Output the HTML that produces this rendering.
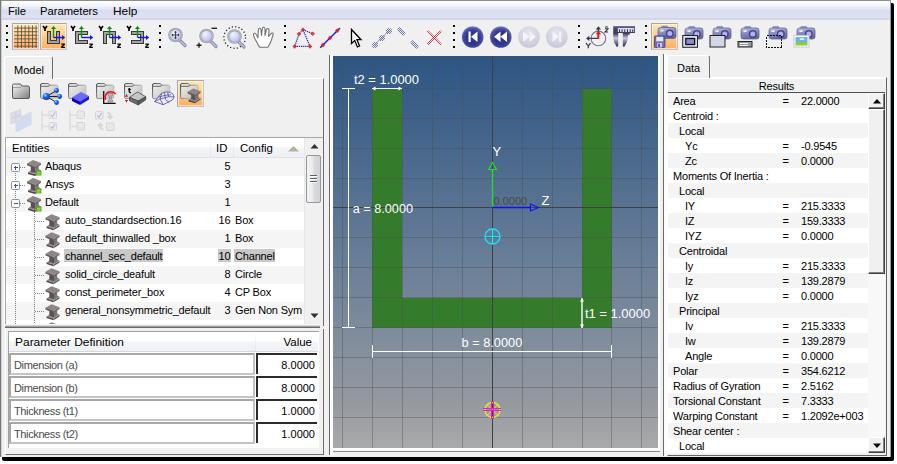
<!DOCTYPE html>
<html><head><meta charset="utf-8">
<style>
*{box-sizing:border-box;margin:0;padding:0}
html,body{width:897px;height:464px;overflow:hidden;background:#fff}
body{font-family:"Liberation Sans",sans-serif;font-size:11px;color:#000;position:relative}
.a{position:absolute}
#win{left:0;top:0;width:891px;height:457px;background:#f0f0f0;border-left:1px solid #787878;box-shadow:inset 1px 0 0 #cfcfcf;border-top:1px solid #8e8e8e;border-right:1px solid #9a9a9a}
#shr{left:891px;top:3px;width:3px;height:458px;background:#000;border-radius:0 2px 2px 0}
#shb{left:2px;top:457px;width:892px;height:4px;background:#000;border-radius:0 0 3px 2px}
#menu{left:2px;top:1px;width:888px;height:19px;background:linear-gradient(#fff 0,#f1f3fa 5px,#e3e7f5 8px,#d9ddf0 9px,#dde1f2 17px,#c3c7de 18px,#e8eaf4 19px)}
.mi{top:5px;font-size:11.500px;color:#000;transform:scaleX(0.975);transform-origin:0 0}
.grip{width:2px;height:23px;background:repeating-linear-gradient(#000 0,#000 2px,transparent 2px,transparent 7px)}
.tb{width:27px;height:27px;border:1px solid #a8a8a8;border-right-color:#c4c4c4;border-bottom-color:#c4c4c4;background:linear-gradient(#ffe7b0,#ffcf8a 45%,#fdad62);box-shadow:inset 0 0 0 1px rgba(255,255,255,.55)}
/* tabs */
.tab{height:22px;border:1px solid #fff;border-right:1px solid #6d6d6d;border-bottom:none;border-radius:3px 3px 0 0;background:#f0f0f0;font-size:11px;padding:7px 0 0 9px}
/* tree */
#tree{left:5px;top:137px;width:318px;height:187px;border-top:1px solid #a7a7a7;border-left:1px solid #a7a7a7;background:#fff;overflow:hidden}
.hd{background:linear-gradient(#fff,#fff 45%,#f3f4f6 55%,#eef0f3);font-size:11.500px;color:#000}.hd span{transform:scaleX(0.99);transform-origin:0 0}
.row{left:0;width:298px;height:18px}
.g{background:#f5f5f5}
.t{font-size:11px;white-space:nowrap;letter-spacing:-0.18px}
/* results */
.r{left:0;width:200px;height:15px;font-size:11px;white-space:nowrap;letter-spacing:-0.2px}
.r span{position:absolute;top:2px}.r span+span+span{letter-spacing:-0.2px}
.rg{background:#f4f4f4}
</style></head><body>
<div id="win" class="a"></div>
<div id="shr" class="a"></div><div id="shb" class="a"></div>
<div id="menu" class="a"></div>
<div class="a mi" style="left:8px">File</div>
<div class="a mi" style="left:40px">Parameters</div>
<div class="a mi" style="left:113px;transform:scaleX(1.03)">Help</div>
<!--TOOLBAR-->
<div class="a grip" style="left:6px;top:25px"></div>
<div class="a grip" style="left:159px;top:25px"></div>
<div class="a grip" style="left:284px;top:25px"></div>
<div class="a grip" style="left:453px;top:25px"></div>
<div class="a grip" style="left:578px;top:25px"></div>
<div class="a grip" style="left:645px;top:25px"></div>
<div class="a tb" style="left:12px;top:23px"></div>
<div class="a tb" style="left:40px;top:23px"></div>
<div class="a tb" style="left:651px;top:23px"></div>
<svg class="a" style="left:0;top:20px" width="891" height="35" viewBox="0 20 891 35" font-family="Liberation Sans, sans-serif">
<defs>
<radialGradient id="lens" cx="0.4" cy="0.35" r="0.7"><stop offset="0" stop-color="#f4f5ff"/><stop offset="0.5" stop-color="#d0d4f8"/><stop offset="1" stop-color="#b4b8ee"/></radialGradient>
<radialGradient id="ball" cx="0.5" cy="0.56" r="0.56"><stop offset="0" stop-color="#2e3288"/><stop offset="0.55" stop-color="#32368c"/><stop offset="0.78" stop-color="#474ca2"/><stop offset="0.92" stop-color="#666cb8"/><stop offset="1" stop-color="#9094cc"/></radialGradient>
<radialGradient id="balld" cx="0.5" cy="0.3" r="0.75"><stop offset="0" stop-color="#e4e4ee"/><stop offset="0.6" stop-color="#d3d3e1"/><stop offset="1" stop-color="#c4c4d6"/></radialGradient>
<linearGradient id="cam" x1="0" y1="0" x2="0.3" y2="1"><stop offset="0" stop-color="#c6c8e6"/><stop offset="0.45" stop-color="#8e90c8"/><stop offset="1" stop-color="#66689e"/></linearGradient>
<linearGradient id="calg" x1="0" y1="0" x2="1" y2="0"><stop offset="0" stop-color="#30304a"/><stop offset="0.5" stop-color="#c8c8d8"/><stop offset="1" stop-color="#34344e"/></linearGradient>
<pattern id="hb" width="2" height="2" patternUnits="userSpaceOnUse"><rect width="1" height="1" fill="#6e74a6"/><rect x="1" y="1" width="1" height="1" fill="#6e74a6"/></pattern><pattern id="hr" width="2" height="2" patternUnits="userSpaceOnUse"><rect width="1" height="1" fill="#d42a3c"/><rect x="1" y="1" width="1" height="1" fill="#d42a3c"/></pattern><g id="mag"><line x1="4" y1="5" x2="9.500" y2="10.500" stroke="#8a8ea0" stroke-width="3.200" stroke-linecap="round"/><line x1="5" y1="6" x2="9.500" y2="10.500" stroke="#b8bce8" stroke-width="1.600" stroke-linecap="round"/><circle cx="0" cy="0" r="6.300" fill="url(#lens)" stroke="#9a9aa4" stroke-width="2"/><circle cx="0" cy="0" r="6.300" fill="none" stroke="#c8c8d4" stroke-width="0.700"/></g>
<g id="camera"><rect x="3.500" y="0.500" width="6.500" height="3.500" rx="1.200" fill="#9698cc" stroke="#6a6ca8" stroke-width="0.500"/><rect x="0" y="2" width="18" height="11" rx="2.500" fill="url(#cam)" stroke="#56588e" stroke-width="0.700"/><circle cx="11.800" cy="8" r="4" fill="#46487e"/><circle cx="11.800" cy="8" r="2.500" fill="#b6aef8"/><rect x="2.500" y="4.300" width="3.200" height="1.600" rx="0.500" fill="#eeeefa"/></g>
<g id="axY" fill="none" stroke="#000" stroke-width="1.400"><path d="M0 2.100L2 4.700L4 2.100M2 4.500V6.900" stroke-width="1.700"/><path d="M18.300 20.100H21.700L18.400 23.300H21.900" stroke-width="1.300" stroke-linejoin="bevel"/></g><g id="axA"><path d="M10.500 13.500V4" stroke="#0a960a" stroke-width="1.400"/><path d="M10.500 2l-2.600 3h5.200z" fill="#0a960a"/><path d="M10.500 13.500h9" stroke="#1212ff" stroke-width="1.400"/><path d="M22.200 13.500l-3.200-2.600v5.200z" fill="#1212ff"/></g>
</defs>
<!-- grid icon -->
<g stroke="#5a4e44" stroke-width="0.850"><path d="M17.800 25.500V48M21.500 25.500V48M25.100 25.500V48M28.800 25.500V48M32.500 25.500V48M36.100 25.500V48M14 28.100H37.500M14 31.700H37.500M14 35.300H37.500M14 38.900H37.500M14 42.500H37.500M14 46.200H37.500"/></g>
<!-- section icons -->
<g transform="translate(43,24)"><use href="#axY"/><path d="M4.500 7.500H7.500V16.500H13.500V7.500H16.500V19.500H4.500Z" fill="#a2a2a2" stroke="#383838" stroke-width="1" stroke-linejoin="miter" shape-rendering="crispEdges"/><use href="#axA"/></g>
<g transform="translate(71,24)"><use href="#axY"/><path d="M4.500 7.500H16.500V10.500H7.500V16.500H16.500V19.500H4.500Z" fill="#a2a2a2" stroke="#383838" stroke-width="1" stroke-linejoin="miter" shape-rendering="crispEdges"/><use href="#axA"/></g>
<g transform="translate(99,24)"><use href="#axY"/><path d="M4.500 19.500V7.500H16.500V19.500H13.500V10.500H7.500V19.500Z" fill="#a2a2a2" stroke="#383838" stroke-width="1" stroke-linejoin="miter" shape-rendering="crispEdges"/><use href="#axA"/></g>
<g transform="translate(127,24)"><use href="#axY"/><path d="M4.500 7.500H16.500V19.500H4.500V16.500H13.500V10.500H4.500Z" fill="#a2a2a2" stroke="#383838" stroke-width="1" stroke-linejoin="miter" shape-rendering="crispEdges"/><use href="#axA"/></g>
<!-- magnifiers -->
<g transform="translate(175.500,35)"><use href="#mag"/><path d="M-3.500 0h7M0 -3.500v7" stroke="#444" stroke-width="1"/><path d="M-4 0l1.500-1.500v3zM4 0l-1.500-1.500v3zM0 -4l-1.500 1.500h3zM0 4l-1.500-1.500h3z" fill="#333"/></g>
<g transform="translate(206.500,36)"><use href="#mag"/><path d="M-10 9.300h5M-7.500 6.800v5" stroke="#222" stroke-width="1.400"/><path d="M5 -7.700h5.500" stroke="#222" stroke-width="1.400"/></g>
<g transform="translate(234.500,36.500)"><circle cx="0.200" cy="1" r="10.800" fill="none" stroke="#222" stroke-width="1.300" stroke-dasharray="1.200 2.200"/><use href="#mag"/></g>
<!-- hand -->
<path d="M259.500 47.300C258 44.500 256.500 41.500 255 39C253.300 36 253 33.800 254.300 33.300C255.600 32.800 256.800 35 258 37.800L258.300 30C258.400 27.800 260.800 27.600 261 30L261.500 35.500L262.300 29C262.600 26.600 265 26.800 265 29.200V35.500L266.300 30C266.900 27.800 269.200 28.300 269 30.500L268.600 36.500L270.800 33.800C272 32.300 273.500 33 273 34.800C272.300 37.500 271.300 41 270 43.500C269.300 45 268.500 46.200 267.800 47.300Z" fill="#fff" stroke="#727272" stroke-width="1.100" stroke-linejoin="round"/>
<!-- triangle polyline -->
<g><path d="M294.700 46.400H310L303 29.700L299 34L294.700 46.400M303 29.700L312.700 33.700" fill="none" stroke="#2a2ab4" stroke-width="1.200" stroke-dasharray="1.300 0.800"/>
<g fill="#dc2222" fill-opacity="0.85"><path d="M294.700 44.100l2.300 2.300-2.300 2.300-2.300-2.300zM310 44.100l2.300 2.300-2.300 2.300-2.300-2.300zM303 27.400l2.300 2.300-2.300 2.300-2.300-2.300zM299 31.700l2.300 2.300-2.300 2.300-2.300-2.300zM312.700 31.400l2.300 2.300-2.300 2.300-2.300-2.300z"/></g></g>
<!-- line with points -->
<path d="M320.200 47.700L340 28" stroke="#1c1cc8" stroke-width="1.400"/><g fill="#dc2222" fill-opacity="0.85"><path d="M323 42.600l2.400 2.400-2.400 2.400-2.400-2.400zM330 35.500l2.400 2.400-2.400 2.400-2.400-2.400zM337.200 28.300l2.400 2.400-2.400 2.400-2.400-2.400z"/></g>
<!-- cursor -->
<path d="M351.500 29.500v14l3.200-3 2.700 6.500 2.200-1-2.700-6.300h4.100z" fill="#fff" stroke="#000" stroke-width="1.300" stroke-linejoin="miter"/>
<!-- dotted line icon -->
<g fill="url(#hb)"><path d="M374.500 45L389 30.500" stroke="#8a90b6" stroke-width="1"/><circle cx="375" cy="45" r="3.100"/><circle cx="382" cy="38" r="3.100"/><circle cx="389" cy="31" r="3.100"/>
</g><g stroke="url(#hb)" stroke-width="4.600" stroke-linecap="round" fill="none"><path d="M399.600 29.800L403 33.200"/><path d="M412.800 42.800L416.200 46.200"/></g>
<!-- red X -->
<g stroke="url(#hr)" stroke-width="2.200" stroke-linecap="butt" fill="none"><path d="M427.500 31L441 44.500"/><path d="M441 31L427.500 44.500"/></g>
<!-- round buttons -->
<circle cx="472.700" cy="37" r="10.800" fill="url(#ball)"/><path d="M468.500 31.500h2.200v10.500h-2.200zM477.500 31.500v10.500l-6.500-5.250z" fill="#fff"/>
<circle cx="500.800" cy="37" r="10.800" fill="url(#ball)"/><path d="M500.500 31.500v10.500l-6.500-5.250zM507 31.500v10.500l-6.500-5.250z" fill="#fff"/>
<circle cx="529" cy="37" r="10.800" fill="url(#balld)"/><path d="M523 31.500v10.500l6.500-5.250zM529.500 31.500v10.500l6.500-5.250z" fill="#f4f4f8"/>
<circle cx="556.800" cy="37" r="10.800" fill="url(#balld)"/><path d="M552.500 31.500v10.500l6.500-5.250zM559 31.500h2.200v10.500h-2.200z" fill="#f4f4f8"/>
<!-- axis/circle icon -->
<g><circle cx="598.400" cy="38.400" r="7.300" fill="none" stroke="#78789a" stroke-width="1.100"/><path d="M598.400 38.400H588M598.400 38.400V28" stroke="#3a3a4a" stroke-width="1.400" fill="none"/><path d="M586 38.400l3.300-2.700v5.400zM598.400 26.200l-2.700 3.300h5.400z" fill="#3a3a4a"/><path d="M598.400 38.800V33" stroke="#f01010" stroke-width="1.700"/><path d="M598.400 31l-2.700 3.300h5.400z" fill="#f01010"/><path d="M605 27h3M605 28.800h3l-3 3.200h3" stroke="#333" stroke-width="1.100" fill="none"/><path d="M586 43.200l2.300 2.600 2.300-2.600M588.300 45.800v2.400" stroke="#333" stroke-width="1.200" fill="none"/></g>
<!-- caliper -->
<g><defs><linearGradient id="calv" x1="0" y1="0" x2="0" y2="1"><stop offset="0" stop-color="#34344e"/><stop offset="0.38" stop-color="#c6c6e2"/><stop offset="0.6" stop-color="#8a8aa8"/><stop offset="1" stop-color="#26263e"/></linearGradient><linearGradient id="calt" x1="0" y1="0" x2="0" y2="1"><stop offset="0" stop-color="#7c7c9c"/><stop offset="0.3" stop-color="#46466a"/><stop offset="1" stop-color="#3c3c5c"/></linearGradient></defs>
<path d="M613.200 26h21.800v7h-21.800z" fill="url(#calt)"/><path d="M617.800 28h16.400v4h-16.400z" fill="#dcdcf2"/><path d="M619.500 29.300v2.700M622.100 29.300v2.700M624.800 29.300v2.700M627.500 29.300v2.700M630.200 29.300v2.700M632.800 29.300v2.700" stroke="#2e2e48" stroke-width="1"/>
<path d="M613.200 33H618.200V46Q617.600 47.300 616.500 46.500Q613.200 42 613.200 37Z" fill="url(#calv)"/><path d="M622.800 33H629.800V34.700H628.200Q628 41.500 624.500 46.500Q623.400 47.300 622.800 46Z" fill="url(#calv)"/></g>
<!-- cameras -->
<g transform="translate(658,25.500)"><use href="#camera"/><rect x="-3.500" y="10.500" width="10.500" height="11.500" rx="0.800" fill="#6e70b2" stroke="#3c3e80" stroke-width="0.800"/><rect x="-1.800" y="11.300" width="7" height="4.500" fill="#e6e6f6"/><rect x="-0.800" y="17.500" width="5" height="4.500" fill="#c8c8e6"/><rect x="0.300" y="18.300" width="1.600" height="3.200" fill="#44468a"/></g>
<g transform="translate(685,26)"><use href="#camera"/><rect x="-2.300" y="9.500" width="14.800" height="11.800" fill="#dcdcec" stroke="#222" stroke-width="1"/><rect x="0.800" y="12.500" width="8.800" height="6" fill="#8890d0" stroke="#111" stroke-width="1.300"/></g>
<g transform="translate(713,26)"><use href="#camera"/><rect x="-3" y="9.500" width="15" height="11.500" fill="#d4d6e8" stroke="#222" stroke-width="1"/></g>
<g transform="translate(741,26)"><use href="#camera"/><rect x="-3" y="15.500" width="14" height="5.500" fill="#9a9aa8" stroke="#222" stroke-width="1"/><path d="M-1 17.500h8M-1 19.500h8" stroke="#fff" stroke-width="0.900"/></g>
<g transform="translate(769,26)"><use href="#camera"/><rect x="-2.500" y="9.500" width="15" height="12" fill="none" stroke="#111" stroke-width="1" stroke-dasharray="2 1" shape-rendering="crispEdges"/></g>
<g transform="translate(797,26)"><use href="#camera"/><rect x="-3" y="9.500" width="15" height="11.500" fill="#fff" stroke="#c8c8c8" stroke-width="1"/><rect x="-1.500" y="11" width="12" height="5" fill="#6ab4ee"/><rect x="-1.500" y="16" width="12" height="3.500" fill="#8ccc3c"/><ellipse cx="5" cy="13" rx="2.500" ry="1" fill="#e8f4ff"/></g>
</svg>
<!--/TOOLBAR-->
<!--LEFT-->
<div class="a" style="left:4px;top:78px;width:320px;height:248px;border-top:1px solid #fff;border-left:1px solid #fff;border-right:1px solid #6d6d6d"></div>
<div class="a tab" style="left:4px;top:56px;width:49px;height:23px;">Model</div>
<div class="a tb" style="left:177px;top:80px"></div>
<svg class="a" style="left:0;top:78px" width="326" height="59" viewBox="0 78 326 59" font-family="Liberation Sans, sans-serif">
<defs>
<linearGradient id="fg" x1="0" y1="0" x2="1" y2="1"><stop offset="0" stop-color="#f4f4f4"/><stop offset="0.45" stop-color="#c4c4c4"/><stop offset="1" stop-color="#7c7c7c"/></linearGradient>
<linearGradient id="fgl" x1="0" y1="0" x2="1" y2="1"><stop offset="0" stop-color="#f4f4f4"/><stop offset="0.5" stop-color="#d6d6d6"/><stop offset="1" stop-color="#b0b0b0"/></linearGradient>
<radialGradient id="bb" cx="0.35" cy="0.3" r="0.8"><stop offset="0" stop-color="#9cd0ff"/><stop offset="0.4" stop-color="#1c6cf0"/><stop offset="1" stop-color="#0030a0"/></radialGradient>
<g id="fold"><path d="M0.500 2.500q0-1.500 1.500-1.500h6q1 0 1.300 1l.3 1H16q1.500 0 1.500 1.500v9.500q0 1.500-1.500 1.500H2q-1.500 0-1.500-1.500z" fill="url(#fg)" stroke="#5a5a5a" stroke-width="1"/><path d="M1 4.500h8" stroke="#888" stroke-width="0.700"/></g>
<linearGradient id="fst" x1="0" y1="0" x2="1" y2="0.6"><stop offset="0" stop-color="#3e3e3e"/><stop offset="0.45" stop-color="#8a8a8a"/><stop offset="1" stop-color="#c6c6c6"/></linearGradient><g id="foldl"><path d="M0.600 2q0-1.400 1.400-1.400h6.300q1 0 1 1v0.600h7.200q1.400 0 1.400 1.400v10.600q0 1.400-1.400 1.400H2q-1.400 0-1.400-1.400z" fill="url(#fgl)" fill-opacity="0.92" stroke="url(#fst)" stroke-width="1"/><path d="M1 3.300h7.600q.8 0 .8-.9" fill="none" stroke="#555" stroke-width="0.900"/></g>
<g id="ibeam"><path d="M1 12.200l4.500-2.700 3.500 1.300 2.500-1.500 2.500 1-6 3.800z" fill="#8c8484"/><path d="M1 12.200l7 2.100v1.700l-7-2.100z" fill="#4e4646"/><path d="M8 14.300l6-3.800v1.700l-6 3.800z" fill="#625a5a"/><path d="M3.800 5.500l4.700 1.800v5.700l-4.700-1.700z" fill="#5a5252"/><path d="M8.500 7.300l3.200-2v5.700l-3.200 2z" fill="#7c7474"/><path d="M0 3.500l6-3.500 8 3-6 3.800z" fill="#8e8686"/><path d="M0 3.500l8 3.300v1.800l-8-3.300z" fill="#5e5656"/><path d="M8 6.800l6-3.800v1.800l-6 3.800z" fill="#6e6666"/></g>
<g id="chk"><rect x="0.500" y="0.500" width="7.500" height="7.500" rx="1" fill="#ececf0" stroke="#d6d6da" stroke-width="1"/><path d="M2.200 4.300l1.700 2 2.800-4.600" fill="none" stroke="#b4bce0" stroke-width="1.200"/></g>
<g id="unchk"><rect x="0.500" y="0.500" width="7.500" height="7.500" rx="1" fill="#e8e8ea" stroke="#d6d6da" stroke-width="1"/></g>
</defs>
<use href="#fold" x="12" y="83"/>
<use href="#foldl" x="40" y="83"/><g stroke="#222" stroke-width="1"><path d="M46.500 96.500l10-6M46.500 96.500h13M46.500 96.500l10 6"/></g><circle cx="46.300" cy="96.500" r="3.600" fill="url(#bb)"/><circle cx="56.500" cy="90.500" r="2.400" fill="url(#bb)"/><circle cx="59.700" cy="96.500" r="2.400" fill="url(#bb)"/><circle cx="56.500" cy="102.500" r="2.400" fill="url(#bb)"/>
<use href="#foldl" x="68" y="83"/><path d="M72 97.500l9-5.500 8 4-9 5.500z" fill="#6a6af8"/><path d="M72 97.500l8 4v3.500l-8-4z" fill="#0808c0"/><path d="M80 101.500l9-5.500v3.500l-9 5.500z" fill="#1a1ae0"/>
<use href="#foldl" x="96" y="83"/><path d="M103.700 91v12.400h12" fill="none" stroke="#111" stroke-width="1.300"/><path d="M105.200 100q-.6-8.300 5.500-8.300q3.500 0 5 2.300" fill="none" stroke="#ff1010" stroke-width="1.500"/><path d="M108 93.300h4.700v1.400l-1.500 1.700v2.400l1.500 1.700v1.500h-4.700v-1.500l1.500-1.700v-2.400l-1.500-1.700z" fill="#b8b8b8" stroke="#6a6a6a" stroke-width="0.600"/>
<use href="#foldl" x="124" y="83"/><path d="M129.300 88v3.600q0 1 1 1h.6M128.200 89.500h2.600" fill="none" stroke="#000" stroke-width="1.300"/><path d="M125.100 96.200h2.800M126.500 96.200v-1.800M125.100 100.600h2.800M126.500 100.600v1.800" stroke="#c81414" stroke-width="1"/><path d="M129.500 97.400l8-5.400 8.300 4.700-7.600 4.400z" fill="#c6c6c6" stroke="#3c3c3c" stroke-width="0.700"/><path d="M129.500 97.400l8.700 3.700v3.900l-8.700-4.200z" fill="#6c6c6c" stroke="#3c3c3c" stroke-width="0.700"/><path d="M138.200 101.100l7.600-4.400v3l-7.600 5.300z" fill="#5c5c5c" stroke="#3c3c3c" stroke-width="0.700"/>
<use href="#foldl" x="152" y="83"/><g fill="#ececfa" stroke="#4a4aa8" stroke-width="0.800"><path d="M154.600 101.500l7-8.300q5-2 9-.8 3 1.500 3.500 4.500l-1.500 3-9.500 4.800z"/><path d="M161.600 93.200l-1.500 5.800-5.500 2.500M160.100 99l8.500-2.300 5.500.2M168.600 96.700l-1-4.500M160.100 99l3 5.700M158 97.300l7-2 6-.5M164.500 93l1 6.500 3.800 3" fill="none"/></g>
<use href="#foldl" x="180" y="83"/><g transform="translate(187.700,88.600) scale(0.92)"><use href="#ibeam"/></g>
<!-- disabled row -->
<g opacity="0.95"><path d="M15.500 118.500q5-1 8.500-3.500 3.500-2.500 7.500-3.500v13.500q-4 1-7.500 3.500-3.500 2.500-8.500 3.500z" fill="#d0dcec"/><path d="M10.800 113l10-3.500v11l-10 3.500z" fill="#dcdce8" stroke="#d2d2de" stroke-width="0.600"/><path d="M15.800 111.200v11M10.800 118.500l10-3.500" stroke="#cacada" stroke-width="0.800"/></g>
<g stroke="#dcdcdc" stroke-width="1.600" fill="none"><path d="M42 110.500v20.500M42 115h6.500M42 126.500h6.500"/><path d="M70 110.500v20.500M70 115h6.500M70 126.500h6.500"/></g>
<use href="#chk" x="48.500" y="110.500"/><use href="#chk" x="48.500" y="122"/>
<use href="#unchk" x="76.500" y="110.500"/><use href="#unchk" x="76.500" y="122"/>
<use href="#chk" x="95" y="111"/><use href="#unchk" x="106" y="122.500"/>
<path d="M107 111.500q4.500 .5 4.500 4.500h2.300l-3.600 3.800-3.600-3.800h2.300q0-2.200-1.900-3z" fill="#d8d8d8"/><path d="M103.500 130.500q-4.500-.5-4.500-4.500h-2.300l3.600-3.800 3.600 3.800h-2.300q0 2.200 1.900 3z" fill="#d8d8d8"/>
</svg>
<div id="tree" class="a">
<div class="a hd" style="left:0;top:0;width:298px;height:20px;border-bottom:1px solid #e0e3e8"><span class="a" style="left:6px;top:4px">Entities</span><span class="a" style="left:210px;top:4px">ID</span><span class="a" style="left:234px;top:4px">Config</span><div class="a" style="left:204px;top:0;width:1px;height:19px;background:linear-gradient(#fff,#dfe2e8)"></div><div class="a" style="left:227px;top:0;width:1px;height:19px;background:linear-gradient(#fff,#dfe2e8)"></div><svg class="a" style="left:282px;top:8px" width="11" height="6"><path d="M0 5.500L5.500 0 11 5.500z" fill="#b4b09c"/></svg></div>
<div class="a row g" style="top:20px">
<span class="a t" style="left:39px;top:2px">Abaqus</span>
<span class="a t" style="left:194.500px;width:30px;text-align:right;top:2px">5</span>
</div>
<div class="a row" style="top:38px">
<span class="a t" style="left:39px;top:2px">Ansys</span>
<span class="a t" style="left:194.500px;width:30px;text-align:right;top:2px">3</span>
</div>
<div class="a row g" style="top:56px">
<span class="a t" style="left:39px;top:2px">Default</span>
<span class="a t" style="left:194.500px;width:30px;text-align:right;top:2px">1</span>
</div>
<div class="a row" style="top:74px">
<span class="a t" style="left:59px;top:2px">auto_standardsection.16</span>
<span class="a t" style="left:194.500px;width:30px;text-align:right;top:2px">16</span>
<span class="a t" style="left:229px;top:2px">Box</span>
</div>
<div class="a row g" style="top:92px">
<span class="a t" style="left:59px;top:2px">default_thinwalled _box</span>
<span class="a t" style="left:194.500px;width:30px;text-align:right;top:2px">1</span>
<span class="a t" style="left:229px;top:2px">Box</span>
</div>
<div class="a row" style="top:110px">
<span class="a" style="left:58px;top:1px;width:99px;height:13px;background:#c9c9c9"></span><span class="a" style="left:212px;top:1px;width:13px;height:13px;background:#c9c9c9"></span><span class="a" style="left:228px;top:1px;width:41px;height:13px;background:#c9c9c9"></span>
<span class="a t" style="left:59px;top:2px">channel_sec_default</span>
<span class="a t" style="left:194.500px;width:30px;text-align:right;top:2px">10</span>
<span class="a t" style="left:229px;top:2px">Channel</span>
</div>
<div class="a row g" style="top:128px">
<span class="a t" style="left:59px;top:2px">solid_circle_deafult</span>
<span class="a t" style="left:194.500px;width:30px;text-align:right;top:2px">8</span>
<span class="a t" style="left:229px;top:2px">Circle</span>
</div>
<div class="a row" style="top:146px">
<span class="a t" style="left:59px;top:2px">const_perimeter_box</span>
<span class="a t" style="left:194.500px;width:30px;text-align:right;top:2px">4</span>
<span class="a t" style="left:229px;top:2px">CP Box</span>
</div>
<div class="a row g" style="top:164px">
<span class="a t" style="left:59px;top:2px">general_nonsymmetric_default</span>
<span class="a t" style="left:194.500px;width:30px;text-align:right;top:2px">3</span>
<span class="a t" style="left:229px;top:2px">Gen Non Sym</span>
</div>
<svg class="a" style="left:0;top:20px" width="70" height="172" viewBox="0 0 70 172"><g stroke="#808080" stroke-width="1" stroke-dasharray="1 1" shape-rendering="crispEdges"><path d="M9.500 9V172M28.500 48V172"/><path d="M14 9.500H20"/><path d="M14 27.500H20"/><path d="M14 45.500H20"/><path d="M29 63.500H38"/><path d="M29 81.500H38"/><path d="M29 99.500H38"/><path d="M29 117.500H38"/><path d="M29 135.500H38"/><path d="M29 153.500H38"/></g><rect x="5.500" y="5.5" width="8" height="8" rx="1" fill="#fcfcfc" stroke="#919191"/><path d="M7.500 9.5h4" stroke="#3c50b4" stroke-width="1" shape-rendering="crispEdges"/><path d="M9.500 7.5v4" stroke="#3c50b4" stroke-width="1" shape-rendering="crispEdges"/><g transform="translate(21,2)"><use href="#ibeam"/><rect x="9" y="10.500" width="5.500" height="5" fill="#58b010"/><path d="M10 12.300h3.500M10 14h3.500" stroke="#c8f080" stroke-width="0.700"/></g><rect x="5.500" y="23.5" width="8" height="8" rx="1" fill="#fcfcfc" stroke="#919191"/><path d="M7.500 27.5h4" stroke="#3c50b4" stroke-width="1" shape-rendering="crispEdges"/><path d="M9.500 25.5v4" stroke="#3c50b4" stroke-width="1" shape-rendering="crispEdges"/><g transform="translate(21,20)"><use href="#ibeam"/><rect x="9" y="10.500" width="5.500" height="5" fill="#58b010"/><path d="M10 12.300h3.500M10 14h3.500" stroke="#c8f080" stroke-width="0.700"/></g><rect x="5.500" y="41.5" width="8" height="8" rx="1" fill="#fcfcfc" stroke="#919191"/><path d="M7.500 45.5h4" stroke="#3c50b4" stroke-width="1" shape-rendering="crispEdges"/><g transform="translate(21,38)"><use href="#ibeam"/><rect x="9" y="10.500" width="5.500" height="5" fill="#58b010"/><path d="M10 12.300h3.500M10 14h3.500" stroke="#c8f080" stroke-width="0.700"/></g><g transform="translate(39.500,56.2)"><use href="#ibeam"/></g><g transform="translate(39.500,74.2)"><use href="#ibeam"/></g><g transform="translate(39.500,92.2)"><use href="#ibeam"/></g><g transform="translate(39.500,110.2)"><use href="#ibeam"/></g><g transform="translate(39.500,128.2)"><use href="#ibeam"/></g><g transform="translate(39.500,146.2)"><use href="#ibeam"/></g><g transform="translate(39.500,164.2)"><use href="#ibeam"/></g></svg>
<div class="a" style="left:298px;top:0;width:19px;height:186px;background:#f0f0f0;border-left:1px solid #e6e6e6"></div>
<svg class="a" style="left:304px;top:5px" width="9" height="6"><path d="M0.500 5.500L4.500 1 8.500 5.500z" fill="#303030"/></svg>
<svg class="a" style="left:304px;top:175px" width="9" height="6"><path d="M0.500 0.500L4.500 5 8.500 0.500z" fill="#303030"/></svg>
<div class="a" style="left:300px;top:17px;width:15px;height:48px;border:1px solid #979797;border-radius:2px;background:linear-gradient(90deg,#f4f4f4,#e9e9eb 45%,#d8d9dc 55%,#d2d3d6)"></div>
<div class="a" style="left:304px;top:37px;width:7px;height:9px;background:repeating-linear-gradient(#5a6270 0,#5a6270 1px,#fff 1px,#fff 2px,transparent 2px,transparent 3px)"></div>
</div>

<div class="a" style="left:5px;top:324px;width:315px;height:4px;background:linear-gradient(#fafafa 1px,#d4d4d4 1px,#d4d4d4 2px,#a0a0a0 2px,#a0a0a0 3px,#686868 3px)"></div>
<div class="a" style="left:5px;top:329px;width:319px;height:126px;border-left:1px solid #fff;border-right:1px solid #6d6d6d;border-bottom:1px solid #6d6d6d"></div>
<div class="a" style="left:8px;top:331px;width:311px;height:117px;border-top:1px solid #a0a0a0;border-left:1px solid #a0a0a0;background:#fff"></div>
<div class="a hd" style="left:9px;top:332px;width:309px;height:20px;border-bottom:1px solid #d5d8de"><span class="a" style="left:6px;top:4px;transform:scaleX(1.04)">Parameter Definition</span><span class="a" style="right:6px;top:4px;transform:none">Value</span><div class="a" style="left:246px;top:0;width:1px;height:19px;background:linear-gradient(#fff,#dfe2e8)"></div></div>
<div class="a" style="left:9px;top:353px;width:246px;height:22px;border:2px solid #a6a6a6;border-right-color:#c4c4c4;border-bottom-color:#c4c4c4;background:#fff;color:#4a4a4a;font-size:11px;letter-spacing:-0.38px;padding:4px 0 0 3px">Dimension (a)</div>
<div class="a" style="left:256px;top:353px;width:61px;height:21px;border-top:2px solid #2c2c2c;border-left:2px solid #2c2c2c;background:#fff;color:#000;font-size:11px;padding:4px 2px 0 0;text-align:right">8.0000</div>
<div class="a" style="left:9px;top:376px;width:246px;height:22px;border:2px solid #a6a6a6;border-right-color:#c4c4c4;border-bottom-color:#c4c4c4;background:#fff;color:#4a4a4a;font-size:11px;letter-spacing:-0.38px;padding:4px 0 0 3px">Dimension (b)</div>
<div class="a" style="left:256px;top:376px;width:61px;height:21px;border-top:2px solid #2c2c2c;border-left:2px solid #2c2c2c;background:#fff;color:#000;font-size:11px;padding:4px 2px 0 0;text-align:right">8.0000</div>
<div class="a" style="left:9px;top:399px;width:246px;height:22px;border:2px solid #a6a6a6;border-right-color:#c4c4c4;border-bottom-color:#c4c4c4;background:#fff;color:#4a4a4a;font-size:11px;letter-spacing:-0.38px;padding:4px 0 0 3px">Thickness (t1)</div>
<div class="a" style="left:256px;top:399px;width:61px;height:21px;border-top:2px solid #2c2c2c;border-left:2px solid #2c2c2c;background:#fff;color:#000;font-size:11px;padding:4px 2px 0 0;text-align:right">1.0000</div>
<div class="a" style="left:9px;top:422px;width:246px;height:22px;border:2px solid #a6a6a6;border-right-color:#c4c4c4;border-bottom-color:#c4c4c4;background:#fff;color:#4a4a4a;font-size:11px;letter-spacing:-0.38px;padding:4px 0 0 3px">Thickness (t2)</div>
<div class="a" style="left:256px;top:422px;width:61px;height:21px;border-top:2px solid #2c2c2c;border-left:2px solid #2c2c2c;background:#fff;color:#000;font-size:11px;padding:4px 2px 0 0;text-align:right">1.0000</div>
<!--/LEFT-->
<!--GFX-->
<div class="a" style="left:329px;top:55px;width:4px;height:400px;background:linear-gradient(90deg,#6a6a6a 1px,#fcfcfc 1px)"></div>
<div class="a" style="left:333px;top:448px;width:327px;height:4px;background:linear-gradient(#fff 2px,#f0f0f0 2px,#f0f0f0 3px,#8a8a8a 3px)"></div><div class="a" style="left:658px;top:56px;width:2px;height:394px;background:#fcfcfc"></div>
<svg class="a" style="left:333px;top:56px" width="325" height="392" viewBox="333 56 325 392" shape-rendering="crispEdges" font-family="Liberation Sans, sans-serif">
<defs><linearGradient id="bg" x1="0" y1="0" x2="0" y2="1"><stop offset="0" stop-color="#2d5582"/><stop offset="0.5" stop-color="#667c97"/><stop offset="0.88" stop-color="#9499a0"/><stop offset="1" stop-color="#aaaaaa"/></linearGradient></defs>
<rect x="333" y="56" width="325" height="392" fill="url(#bg)"/>
<path d="M372 89H402V298H582V89H612V328H372Z" fill="#347c2c"/>
<g stroke="#4b4b4b" stroke-opacity="0.38" stroke-width="1">
<path d="M342.500 56V448M372.500 56V448M402.500 56V448M432.500 56V448M462.500 56V448M522.500 56V448M552.500 56V448M582.500 56V448M611.500 56V448M641.500 56V448"/>
<path d="M333 58.500H658M333 88.500H658M333 118.500H658M333 148.500H658M333 178.500H658M333 237.500H658M333 267.500H658M333 297.500H658M333 327.500H658M333 357.500H658M333 387.500H658M333 417.500H658"/>
</g>
<path d="M492.500 56V448M333 207.500H658" stroke="#404042" stroke-width="1"/>
<!-- dims -->
<g stroke="#fff" stroke-width="1" fill="none">
<path d="M348.500 89V327M342 88.500H355M342 327.500H355"/>
<path d="M372 88.500H402"/>
<path d="M372 351.500H612M372.500 345V358M611.500 345V358"/>
<path d="M582 298V328" shape-rendering="auto" stroke-width="1.400"/>
</g>
<g fill="#fff" shape-rendering="auto"><path d="M372 88.500l3.500-2v4zM402 88.500l-3.500-2v4zM582 298l-2 3.500h4zM582 328l-2-3.500h4z"/></g>
<g fill="#fff" font-size="13.600" shape-rendering="auto">
<text x="354" y="84" textLength="65" lengthAdjust="spacingAndGlyphs">t2 = 1.0000</text>
<text x="352.800" y="213" textLength="60.200" lengthAdjust="spacingAndGlyphs">a = 8.0000</text>
<text x="461.500" y="347" textLength="60.800" lengthAdjust="spacingAndGlyphs">b = 8.0000</text>
<text x="585" y="318" textLength="65.200" lengthAdjust="spacingAndGlyphs">t1 = 1.0000</text>
<text x="492.500" y="156" font-size="13">Y</text>
<text x="541.500" y="205" font-size="13">Z</text>
</g>
<text x="493.500" y="205" font-size="11" fill="#484848" shape-rendering="auto">0.0000</text>
<g shape-rendering="auto" fill="none">
<path d="M492.500 208V170" stroke="#22e022" stroke-width="1.300"/>
<path d="M492.500 162.500l-4 7h8z" stroke="#22e022" stroke-width="1.100"/>
<path d="M492 207.500H531" stroke="#1010f0" stroke-width="1.500"/>
<path d="M538.500 207.500l-8-3.500v7z" stroke="#1010f0" stroke-width="1.100"/>
<circle cx="492.500" cy="236.500" r="7.500" stroke="#19e6f0" stroke-width="1.300"/>
<path d="M492.500 229v15M485 236.500h15" stroke="#19e6f0" stroke-width="1.200"/>
<circle cx="492.500" cy="410" r="7.500" stroke="#e8e81c" stroke-width="1.500"/>
<path d="M487 404.500l11 11M498 404.500l-11 11" stroke="#e8e81c" stroke-width="1"/>
<path d="M491.500 401v18M493.500 401v18M483 408.500h18M483 410.500h18" stroke="#f018d8" stroke-width="1"/>
</g>
</svg>
<!--/GFX-->
<!--RIGHT-->
<div class="a" style="left:663px;top:54px;width:4px;height:402px;background:linear-gradient(90deg,#6a6a6a 1px,#fcfcfc 1px)"></div>
<div class="a" style="left:667px;top:77px;width:220px;height:379px;border-top:1px solid #fff;border-left:1px solid #fff;border-right:1px solid #646464;border-bottom:1px solid #646464"></div>
<div class="a tab" style="left:667px;top:55px;width:43px;height:23px;padding:6px 0 0 9px">Data</div>
<div class="a" style="left:668px;top:78px;width:217px;height:15px;background:#f0f0f0;border-top:1px solid #fff;border-bottom:1px solid #505050;text-align:center;font-size:11px;letter-spacing:-0.2px;padding-top:1px">Results</div>
<div class="a" style="left:668px;top:93px;width:200px;height:360px;background:#fff;overflow:hidden">
<div class="a r rg" style="top:0px"><span style="left:5px">Area</span><span style="left:114.500px">=</span><span style="left:133px">22.0000</span></div>
<div class="a r" style="top:15px"><span style="left:5px">Centroid :</span></div>
<div class="a r rg" style="top:30px"><span style="left:11px">Local</span></div>
<div class="a r" style="top:45px"><span style="left:17px">Yc</span><span style="left:114.500px">=</span><span style="left:133px">-0.9545</span></div>
<div class="a r rg" style="top:60px"><span style="left:17px">Zc</span><span style="left:114.500px">=</span><span style="left:133px">0.0000</span></div>
<div class="a r" style="top:75px"><span style="left:5px">Moments Of Inertia :</span></div>
<div class="a r rg" style="top:90px"><span style="left:11px">Local</span></div>
<div class="a r" style="top:105px"><span style="left:17px">IY</span><span style="left:114.500px">=</span><span style="left:133px">215.3333</span></div>
<div class="a r rg" style="top:120px"><span style="left:17px">IZ</span><span style="left:114.500px">=</span><span style="left:133px">159.3333</span></div>
<div class="a r" style="top:135px"><span style="left:17px">IYZ</span><span style="left:114.500px">=</span><span style="left:133px">0.0000</span></div>
<div class="a r rg" style="top:150px"><span style="left:11px">Centroidal</span></div>
<div class="a r" style="top:165px"><span style="left:17px">Iy</span><span style="left:114.500px">=</span><span style="left:133px">215.3333</span></div>
<div class="a r rg" style="top:180px"><span style="left:17px">Iz</span><span style="left:114.500px">=</span><span style="left:133px">139.2879</span></div>
<div class="a r" style="top:195px"><span style="left:17px">Iyz</span><span style="left:114.500px">=</span><span style="left:133px">0.0000</span></div>
<div class="a r rg" style="top:210px"><span style="left:11px">Principal</span></div>
<div class="a r" style="top:225px"><span style="left:17px">Iv</span><span style="left:114.500px">=</span><span style="left:133px">215.3333</span></div>
<div class="a r rg" style="top:240px"><span style="left:17px">Iw</span><span style="left:114.500px">=</span><span style="left:133px">139.2879</span></div>
<div class="a r" style="top:255px"><span style="left:17px">Angle</span><span style="left:114.500px">=</span><span style="left:133px">0.0000</span></div>
<div class="a r rg" style="top:270px"><span style="left:5px">Polar</span><span style="left:114.500px">=</span><span style="left:133px">354.6212</span></div>
<div class="a r" style="top:285px"><span style="left:5px">Radius of Gyration</span><span style="left:114.500px">=</span><span style="left:133px">2.5162</span></div>
<div class="a r rg" style="top:300px"><span style="left:5px">Torsional Constant</span><span style="left:114.500px">=</span><span style="left:133px">7.3333</span></div>
<div class="a r" style="top:315px"><span style="left:5px">Warping Constant</span><span style="left:114.500px">=</span><span style="left:133px">1.2092e+003</span></div>
<div class="a r rg" style="top:330px"><span style="left:5px">Shear center :</span></div>
<div class="a r" style="top:345px"><span style="left:11px">Local</span></div>
</div>
<div class="a" style="left:868px;top:93px;width:17px;height:360px;background:#f8f8f8"></div>
<div class="a" style="left:868px;top:93px;width:17px;height:16px;border:1px solid;border-color:#fff #404040 #404040 #fff;box-shadow:inset -1px -1px 0 #808080;background:#f0f0f0"></div>
<div class="a" style="left:868px;top:437px;width:17px;height:16px;border:1px solid;border-color:#fff #404040 #404040 #fff;box-shadow:inset -1px -1px 0 #808080;background:#f0f0f0"></div>
<div class="a" style="left:868px;top:109px;width:17px;height:165px;border:1px solid;border-color:#fff #404040 #404040 #fff;box-shadow:inset -1px -1px 0 #808080;background:#f0f0f0"></div>
<svg class="a" style="left:872.500px;top:98px" width="9" height="6"><path d="M0 5.500L4 1 8 5.500z" fill="#000"/></svg>
<svg class="a" style="left:872.500px;top:443px" width="9" height="6"><path d="M0 0.500L4 5 8 0.500z" fill="#000"/></svg>
<!--/RIGHT-->
</body></html>
